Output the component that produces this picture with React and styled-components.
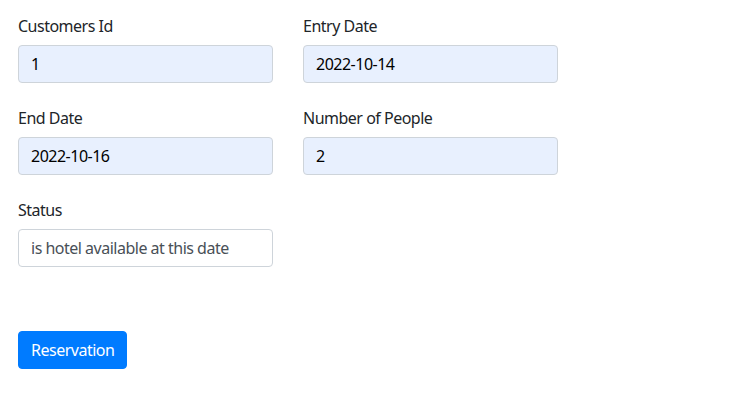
import React from "react";
import styled, { createGlobalStyle } from "styled-components";

const Global = createGlobalStyle`
  html, body { margin: 0; padding: 0; background: #fff; }
  body { font-family: "Segoe UI", "Noto Sans", sans-serif; font-size: 16px; line-height: 1.5; color: #212529; letter-spacing: -0.5px; }
  * { box-sizing: border-box; }
`;

const Page = styled.div`
  padding: 13px 18px;
`;

const Row = styled.div`
  display: grid;
  grid-template-columns: 255px 255px;
  column-gap: 30px;
  margin-bottom: 22px;
`;

const Group = styled.div`
  display: flex;
  flex-direction: column;
`;

const Label = styled.label`
  display: block;
  padding-top: 1px;
  margin-bottom: 7px;
  line-height: 24px;
`;

const Input = styled.div`
  height: 38px;
  padding: 6px 12px;
  border: 1px solid #ced4da;
  border-radius: 4px;
  background: ${(p) => (p.$filled ? "#e8f0fe" : "#fff")};
  color: ${(p) => (p.$filled ? "#000" : "#495057")};
  line-height: 24px;
  white-space: nowrap;
`;

const Actions = styled.div`
  padding-top: 42px;
`;

const Button = styled.button`
  height: 38px;
  padding: 6px 12px;
  border: 1px solid #007bff;
  border-radius: 4px;
  background: #007bff;
  color: #fff;
  font: inherit;
  letter-spacing: inherit;
  line-height: 24px;
`;

function Field({ label, value, filled = true }) {
  return (
    <Group>
      <Label>{label}</Label>
      <Input $filled={filled}>{value}</Input>
    </Group>
  );
}

export default function App() {
  return (
    <>
      <Global />
      <Page>
        <Row>
          <Field label="Customers Id" value="1" />
          <Field label="Entry Date" value="2022-10-14" />
        </Row>
        <Row>
          <Field label="End Date" value="2022-10-16" />
          <Field label="Number of People" value="2" />
        </Row>
        <Row>
          <Field label="Status" value="is hotel available at this date" filled={false} />
        </Row>
        <Actions>
          <Button>Reservation</Button>
        </Actions>
      </Page>
    </>
  );
}
